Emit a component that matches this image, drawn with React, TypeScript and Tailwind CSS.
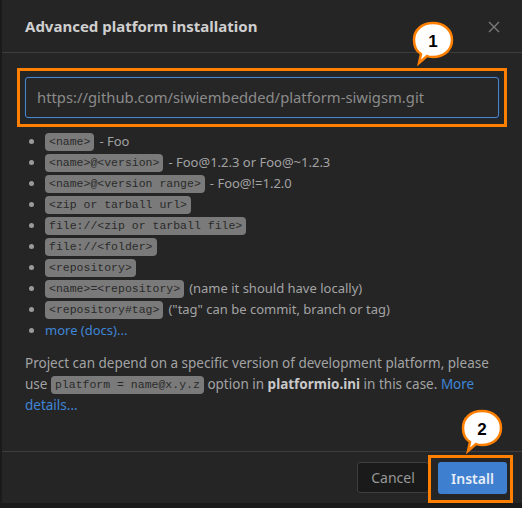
import React from "react";

const Code = ({ children }: { children: React.ReactNode }) => (
  <span className="inline-block rounded-[4px] bg-[#7a7a7a] px-[4px] leading-[18px] text-[#2a2a2a] [font-family:'Liberation_Mono',monospace] text-[11.5px] align-middle">
    {children}
  </span>
);

const Bubble = ({ n, className }: { n: string; className: string }) => (
  <div className={"absolute " + className}>
    <svg width="46" height="46" viewBox="0 0 46 46">
      <path
        d="M23 2 C34 2 42 9 42 19 C42 29 34 36 23 36 C21 36 19 36 17 35 L9 42 L11 33 C6 30 4 25 4 19 C4 9 12 2 23 2 Z"
        fill="#ffffff"
        stroke="#ff7f00"
        strokeWidth="2.5"
      />
      <text
        x="23"
        y="26"
        textAnchor="middle"
        fontSize="17"
        fontWeight="700"
        fill="#000"
        style={{ fontFamily: "'Liberation Sans', Arial, sans-serif" }}
      >
        {n}
      </text>
    </svg>
  </div>
);

export default function App() {
  const rows: [React.ReactNode, string][] = [
    ["<name>", "- Foo"],
    ["<name>@<version>", "- Foo@1.2.3 or Foo@~1.2.3"],
    ["<name>@<version range>", "- Foo@!=1.2.0"],
    ["<zip or tarball url>", ""],
    ["file://<zip or tarball file>", ""],
    ["file://<folder>", ""],
    ["<repository>", ""],
    ["<name>=<repository>", "(name it should have locally)"],
    ["<repository#tag>", '("tag" can be commit, branch or tag)'],
  ];
  return (
    <div className="relative w-[522px] h-[508px] bg-[#1a1a1a] overflow-hidden [font-family:'Noto_Sans',sans-serif]">
      <div className="ml-[2px] h-[503px] bg-[#252526] flex flex-col">
        <div className="h-[53px] flex items-center justify-between pl-[23px] pr-[22px] border-b border-[#3d3d3d] shrink-0">
          <div className="text-[15px] font-bold text-[#cfcfcf]">
            Advanced platform installation
          </div>
          <svg width="12" height="12" viewBox="0 0 12 12" className="mt-[1px]">
            <path d="M1 1 L11 11 M11 1 L1 11" stroke="#7a7a7a" strokeWidth="1.4" />
          </svg>
        </div>
        <div className="flex-1 px-[23px] pt-[24px]">
          <div className="h-[41px] rounded-[3px] border border-[#4b86c6] bg-[#262626] shadow-[0_0_0_1px_#1c2a3a] flex items-center px-[11px]">
            <span className="text-[14.8px] text-[#8b8b8b]">
              https://github.com/siwiembedded/platform-siwigsm.git
            </span>
          </div>
          <ul className="mt-[13px] pl-[20px] text-[13px] text-[#a3a3a3]">
            {rows.map(([c, t], i) => (
              <li key={i} className="relative h-[21px] flex items-center gap-[5px]">
                <span className="absolute left-[-16px] top-[8px] w-[5px] h-[5px] rounded-full bg-[#9a9a9a]" />
                <Code>{c}</Code>
                {t && <span>{t}</span>}
              </li>
            ))}
            <li className="relative h-[21px] flex items-center">
              <span className="absolute left-[-16px] top-[8px] w-[5px] h-[5px] rounded-full bg-[#9a9a9a]" />
              <span className="text-[#3f86d6]">more (docs)...</span>
            </li>
          </ul>
          <p className="mt-[12px] text-[13.5px] leading-[21px] text-[#a3a3a3] pr-[2px]">
            Project can depend on a specific version of development platform, please use{" "}
            <Code>platform = name@x.y.z</Code> option in{" "}
            <b className="text-[#c8c8c8] font-bold">platformio.ini</b> in this case.{" "}
            <span className="text-[#3f86d6]">More details...</span>
          </p>
        </div>
        <div className="h-[52px] border-t border-[#3d3d3d] flex justify-end items-start gap-[9px] pt-[10px] pr-[15px] shrink-0">
          <button className="w-[72px] h-[31px] rounded-[3px] bg-[#1a1a1a] border border-[#3e3e3e] text-[14px] text-[#979797]">
            Cancel
          </button>
          <button className="w-[69px] h-[32px] rounded-[3px] bg-[#3f7fcf] text-[14px] font-semibold text-[#e6edf6]">
            Install
          </button>
        </div>
      </div>

      <div className="absolute left-[17px] top-[68px] w-[490px] h-[59px] border-[3px] border-[#ff7f00] pointer-events-none" />
      <div className="absolute left-[428px] top-[455px] w-[85px] h-[48px] border-[3px] border-[#ff7f00] pointer-events-none" />
      <Bubble n="1" className="left-[410px] top-[21px]" />
      <Bubble n="2" className="left-[459px] top-[409px]" />
    </div>
  );
}
